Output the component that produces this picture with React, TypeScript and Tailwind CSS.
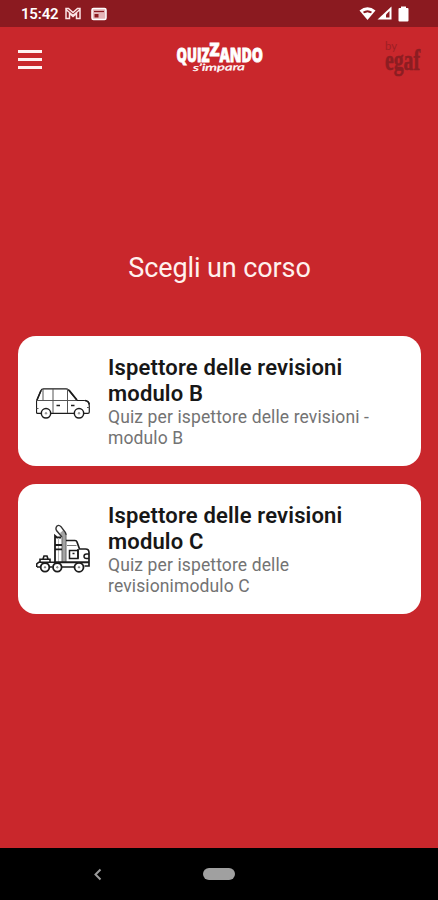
import type { ReactNode } from "react";

type Course = {
  id: string;
  title: string;
  description: string;
  icon: ReactNode;
};

function CarIcon() {
  return (
    <svg viewBox="36 388 54 31" className="mt-[5px] h-[31px] w-[54px]" fill="none" stroke="#1c1c1c" strokeWidth="1.2">
      <path d="M41 413.3h-3.5q-1 0-1-1V401l4.500-10.500q.6-1.700 2.500-1.700H66q1.500 0 2.500 1.200l8.500 10.500h7q5.300 0 5.300 5.500v6q0 1.300-1.300 1.300h-4M51 413.300h23" />
      <path d="M36.500 400.500H77M43 389v11.500M53 389v24M67.500 389v24M36.500 408.500h2M87 407.500h2.500" stroke="#555" strokeWidth="1" />
      <path d="m37 400 4-9.500M69 390l8 10M85 400.500q4 .5 4.300 4" strokeWidth="1.600" />
      <path d="M56.500 405.500H60M71 405.500h3.500" strokeWidth="1.400" />
      <circle cx="46" cy="413.300" r="4.700" strokeWidth="1.500" />
      <circle cx="79" cy="413.300" r="4.700" strokeWidth="1.500" />
      <circle cx="46" cy="413.300" r="0.800" strokeWidth="0.500" />
      <circle cx="79" cy="413.300" r="0.800" strokeWidth="0.500" />
    </svg>
  );
}

function TruckIcon() {
  return (
    <svg viewBox="36 524 54 49" className="-mt-px h-[49px] w-[54px]" fill="none" stroke="#1c1c1c" strokeWidth="1.500">
      <path d="M62 536.500 60 533l3-2.500 3 4v28h-4z" fill="#a3a3a3" stroke="none" />
      <path d="m62 537-5.500-6.500q-1.300-2.500.5-4.500 2-1.500 4 .7l4.300 5.800q.7 1 .7 2.500" stroke="#333" strokeWidth="1.400" />
      <path d="M62 537v25.500M66 534v28.500" stroke="#666" strokeWidth="1" />
      <path d="M61 537.500h-4l-2-1.700V562" strokeWidth="1.800" />
      <path d="M58.500 538v24" stroke="#bbb" strokeWidth="1" />
      <path d="M55 545h7M55 549.300h7" strokeWidth="1.800" />
      <path d="M66 540.500h9q1.500 0 2 1.500l2.500 7h6q3.500 0 3.500 3.500v13.500h-4.500" strokeWidth="1.700" />
      <path d="M67 545.500h9.500" stroke="#777" strokeWidth="1" />
      <path d="M69.500 550.500h8.500v8h-8.500zM89 554h-2.500q-2.500 0-2.500 2.300t2.500 2.300H89" />
      <path d="M78 549v9.500M72.500 553.500h2" strokeWidth="1.600" />
      <path d="M54 562.300h35" strokeWidth="1.900" />
      <path d="M40 562.500v-3.300h10v3.300M43 559l1-3h3l1 3M36.700 567v-3l2-1.700H54M37 567h3.500M49.500 567h3M61.500 567h12.500" strokeWidth="1.600" />
      <circle cx="45" cy="567.300" r="4.300" fill="#fff" strokeWidth="1.800" />
      <circle cx="57.300" cy="567.300" r="4.300" fill="#fff" strokeWidth="1.800" />
      <circle cx="79" cy="567.300" r="4.500" fill="#fff" strokeWidth="1.800" />
      <circle cx="45" cy="567.300" r="0.700" strokeWidth="0.600" />
      <circle cx="57.300" cy="567.300" r="0.700" strokeWidth="0.600" />
      <circle cx="79" cy="567.300" r="0.700" strokeWidth="0.600" />
    </svg>
  );
}

const courses: Course[] = [
  {
    id: "b",
    title: "Ispettore delle revisioni modulo B",
    description: "Quiz per ispettore delle revisioni - modulo B",
    icon: <CarIcon />,
  },
  {
    id: "c",
    title: "Ispettore delle revisioni modulo C",
    description: "Quiz per ispettore delle revisionimodulo C",
    icon: <TruckIcon />,
  },
];

function StatusBar() {
  return (
    <div className="flex h-[27px] items-center justify-between bg-[#8b1a20] pr-[29px] pl-[21px] text-white">
      <div className="flex items-center">
        <span className="w-[38px] pt-px text-[15px] leading-none font-semibold tracking-[-0.2px] whitespace-nowrap">15:42</span>
        <svg viewBox="0 0 16 13" className="ml-[6px] h-[13px] w-4" fill="none" stroke="#fbe3e5" strokeWidth="1.500">
          <path d="M1 11.500v-10h2.500L8 5.500l4.500-4H15v10h-3.500V6.500L8 9.500l-3.500-3v5zM1 2.500l7 6 7-6" />
        </svg>
        <svg viewBox="0 0 16 14" className="ml-[10px] h-[14px] w-4">
          <rect x="1" y="1.500" width="14" height="11" rx="1.500" fill="#e4b5b8" stroke="#fff" strokeWidth="1.500" />
          <path d="M3 4.500h10" stroke="#8b1a20" strokeWidth="1.200" />
          <path d="M3.500 7h4v3.500h-4z" fill="#8b1a20" />
        </svg>
      </div>
      <div className="flex items-center">
        <svg viewBox="0 0 17 15" className="h-[15px] w-[17px]">
          <path d="M.5 4.500q8-6.500 16 0L8.500 14z" fill="#fff" />
          <path d="M4 5.700q4.500-3 9 0l-1 1.500-2-.5q-1.500-.7-3 0l-2 .5z" fill="#8b1a20" />
        </svg>
        <svg viewBox="0 0 15 15" className="ml-px h-[15px] w-[15px]">
          <path d="M14.500.5v13H.5z" fill="#fff" />
          <path d="M12.500 5v6.500H9V8.500z" fill="#8b1a20" />
        </svg>
        <svg viewBox="0 0 11 16" className="ml-[6px] h-4 w-[11px]" fill="#fff">
          <path d="M3 .5h5V2h1.500q1 0 1 1v11.500q0 1-1 1h-8q-1 0-1-1V3q0-1 1-1H3z" />
        </svg>
      </div>
    </div>
  );
}

function BrandLogo() {
  return (
    <svg viewBox="0 0 90 36" className="h-9 w-[90px] overflow-visible" fill="#fff" aria-label="Quizzando s'impara">
      <g fontFamily="'Open Sans', sans-serif" fontWeight="800" stroke="#fff" strokeWidth="0.800">
        <text x="1.500" y="20.500" fontSize="19" textLength="33" lengthAdjust="spacingAndGlyphs">QUIZ</text>
        <text x="34.500" y="14.500" fontSize="17" textLength="10" lengthAdjust="spacingAndGlyphs">Z</text>
        <text x="44.500" y="20.500" fontSize="19" textLength="43.500" lengthAdjust="spacingAndGlyphs">ANDO</text>
      </g>
      <text x="18" y="29.500" fontFamily="Lato, sans-serif" fontStyle="italic" fontSize="9.500" fontWeight="400" stroke="#fff" strokeWidth="0.300" textLength="52" lengthAdjust="spacingAndGlyphs" transform="rotate(-1 44 29)">s’impara</text>
    </svg>
  );
}

function PublisherLogo() {
  return (
    <svg viewBox="0 0 38 38" className="h-[38px] w-[38px] overflow-visible" fill="#8c1d22" aria-label="by egaf">
      <text x="1" y="9.500" fontFamily="Lato, sans-serif" fontSize="12" textLength="12" lengthAdjust="spacingAndGlyphs" opacity="0.700">by</text>
      <text x="1" y="29.500" fontFamily="'Liberation Serif', serif" fontSize="30" fontWeight="700" stroke="#8c1d22" strokeWidth="0.600" textLength="35" lengthAdjust="spacingAndGlyphs">egaf</text>
    </svg>
  );
}

function Header() {
  return (
    <header className="flex h-[63px] items-center justify-between pr-4 pl-[18px]">
      <button type="button" aria-label="Menu" className="flex w-[38px] flex-col gap-[5px] pt-px">
        <span className="h-[3px] w-6 bg-[#fff1f1]" />
        <span className="h-[3px] w-6 bg-[#fff1f1]" />
        <span className="h-[3px] w-6 bg-[#fff1f1]" />
      </button>
      <BrandLogo />
      <PublisherLogo />
    </header>
  );
}

function CourseCard({ course }: { course: Course }) {
  return (
    <button type="button" className="flex h-[130px] w-full items-center rounded-[18px] bg-white pl-[18px] text-left">
      <span className="w-[72px] shrink-0">{course.icon}</span>
      <span className="block w-[280px] pt-0.5">
        <span className="block w-[245px] text-[22px] leading-[26px] font-semibold tracking-[0.16px] text-[#171717]">{course.title}</span>
        <span className="block text-[17.500px] leading-[21px] tracking-[0.12px] text-[#737373]">{course.description}</span>
      </span>
    </button>
  );
}

export default function App() {
  return (
    <div className="flex h-[900px] w-[438px] flex-col overflow-hidden bg-[#c9272c] font-['Roboto',sans-serif]">
      <StatusBar />
      <Header />
      <main className="flex-1 pr-[17px] pl-[18px] pt-[161px]">
        <h1 className="text-center text-[27px] leading-[34px] font-normal tracking-[-0.1px] text-[#fff1ee]">Scegli un corso</h1>
        <div className="mt-[51px] flex flex-col gap-[18px]">
          {courses.map((course) => (
            <CourseCard key={course.id} course={course} />
          ))}
        </div>
      </main>
      <nav className="flex h-[52px] items-center bg-black pl-[93px]">
        <svg viewBox="0 0 9 13" className="h-[13px] w-[9px]" fill="none" stroke="#9b9b9b" strokeWidth="2">
          <path d="M7.500 1.500 2.500 6.500 7.500 11.500" />
        </svg>
        <span className="ml-[101px] h-3 w-8 rounded-full bg-[#a0a0a0]" />
      </nav>
    </div>
  );
}
